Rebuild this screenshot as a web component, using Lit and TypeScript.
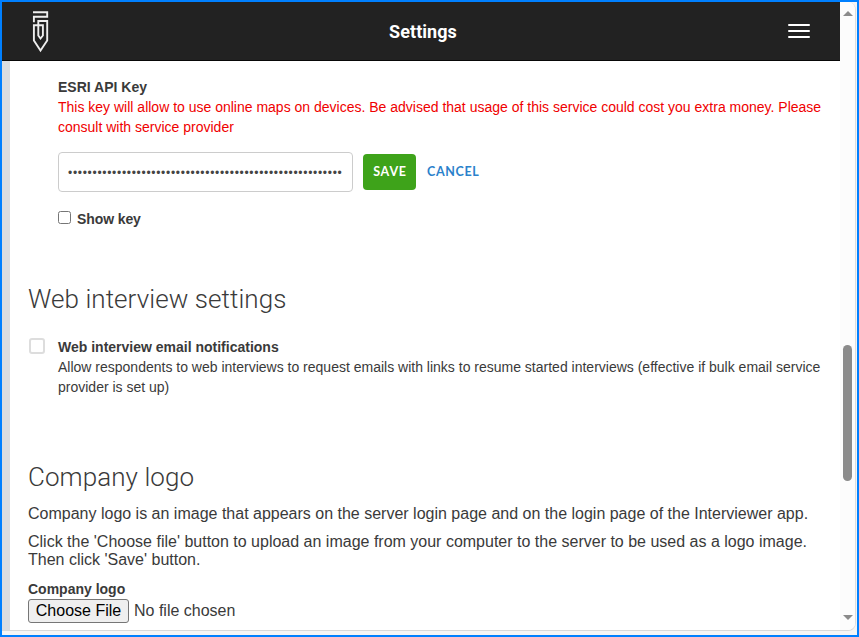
import { LitElement, html, css } from "lit";
import { customElement } from "lit/decorators.js";

@customElement("app-root")
export class AppRoot extends LitElement {
  static styles = css`
    :host { display: block; height: 637px; box-sizing: border-box; border: 2px solid #0080ff; background: #f5f5f5; overflow: hidden; font-family: "Liberation Sans", Arial, sans-serif; font-size: 14px; line-height: 20px; color: #3a3a3a; }
    * { box-sizing: border-box; }
    .window { display: flex; height: 629px; width: 854px; background: #fff; border-right: 1px solid #ddd; border-bottom: 1px solid #d8d8d8; border-radius: 0 8px 8px 0; overflow: hidden; }
    .page { width: 838px; display: flex; flex-direction: column; }
    header { height: 59px; flex: none; background: #222; border-bottom: 1px solid #080808; display: grid; grid-template-columns: 60px 1fr 60px; align-items: center; color: #fff; padding-left: 4px; }
    .logo { display: block; margin-left: 26px; width: 18px; height: 44px; margin-top: 2px; }
    .title { text-align: center; font: 700 18px/24px Roboto, sans-serif; padding-top: 1px; letter-spacing: 0.05px; }
    .menu { display: flex; flex-direction: column; gap: 4px; width: 22px; margin-left: 8px; }
    .menu i { height: 2px; background: #fff; border-radius: 1px; }
    .body { flex: 1; border-left: 8px solid #dadde0; padding: 16px 0 0 18px; white-space: nowrap; }
    .indent { padding-left: 30px; }
    .b { font-weight: 700; }
    .warn { color: #f00000; }
    .row { display: flex; align-items: center; margin-top: 15px; }
    .key { width: 295px; height: 40px; border: 1px solid #ccc; border-radius: 4px; padding: 1px 9px 0; font-size: 12px; letter-spacing: 0.7px; line-height: 39px; color: #444; }
    .save { margin-left: 10px; width: 53px; height: 36px; border-radius: 4px; background: #3ea31a; color: #fff; text-align: center; font: 700 12.5px/36px Lato, sans-serif; letter-spacing: 0.8px; padding-left: 1px; }
    .cancel { margin-left: 11px; color: #2a81cb; font: 700 12.5px/34px Lato, sans-serif; letter-spacing: 0.65px; padding-bottom: 1px; }
    .show { display: flex; margin-top: 17px; gap: 6px; letter-spacing: -0.1px; }
    .cb { width: 13px; height: 13px; border: 1px solid #767676; border-radius: 2.5px; margin-top: 2px; }
    h2 { font: 300 26px/36px Roboto, sans-serif; margin: 0; letter-spacing: 0.07px; }
    .web { margin-top: 52px; }
    .opt { display: flex; margin-top: 20px; }
    .big { width: 16px; height: 16px; border: 2px solid #ddd; border-radius: 3px; margin: 1px 13px 0 1px; flex: none; }
    .co { margin-top: 62px; }
    p { font-size: 16px; line-height: 18px; margin: 0 0 10px; }
    .co + p { margin-top: 10px; }
    .filelabel { margin-top: 10px; }
    .file { display: flex; align-items: center; gap: 5px; font-size: 16px; }
    .choose { width: 101px; height: 24px; border: 1px solid #767676; border-radius: 3px; background: #efefef; color: #000; text-align: center; line-height: 22px; }
    .scroll { width: 15px; background: #fcfcfc; display: flex; flex-direction: column; align-items: center; padding: 9px 0 10px; }
    .up, .down { border: 5px solid transparent; width: 0; height: 0; }
    .up { border-top: 0; border-bottom-color: #8b8b8b; }
    .down { border-bottom: 0; border-top-color: #8b8b8b; margin-top: auto; }
    .thumb { margin-top: 329px; width: 9px; height: 136px; border-radius: 5px; background: #8b8b8b; }
  `;

  render() {
    return html`
      <div class="window">
        <div class="page">
          <header>
            <svg class="logo" viewBox="0 0 18 44" fill="none" stroke="#eee" stroke-width="1.9">
              <path d="M1 2.2H15.2V6.8H1.9V12.2" />
              <path d="M6.3 15V11H15.2V30.5L8.5 40.6L1.9 30.5V15.2H10.9V25.5L8.5 28.5L6.3 25.5V14" />
            </svg>
            <div class="title">Settings</div>
            <div class="menu"><i></i><i></i><i></i></div>
          </header>
          <div class="body">
            <div class="indent">
              <div class="b">ESRI API Key</div>
              <div class="warn">This key will allow to use online maps on devices. Be advised that usage of this service could cost you extra money. Please<br />consult with service provider</div>
              <div class="row">
                <div class="key">${"•".repeat(56)}</div>
                <div class="save">SAVE</div>
                <div class="cancel">CANCEL</div>
              </div>
              <div class="show"><span class="cb"></span><span class="b">Show key</span></div>
            </div>
            <h2 class="web">Web interview settings</h2>
            <div class="opt">
              <span class="big"></span>
              <div><div class="b">Web interview email notifications</div>Allow respondents to web interviews to request emails with links to resume started interviews (effective if bulk email service<br />provider is set up)</div>
            </div>
            <h2 class="co">Company logo</h2>
            <p>Company logo is an image that appears on the server login page and on the login page of the Interviewer app.</p>
            <p>Click the 'Choose file' button to upload an image from your computer to the server to be used as a logo image.<br />Then click 'Save' button.</p>
            <div class="b filelabel">Company logo</div>
            <div class="file"><span class="choose">Choose File</span><span>No file chosen</span></div>
          </div>
        </div>
        <div class="scroll"><span class="up"></span><span class="thumb"></span><span class="down"></span></div>
      </div>
    `;
  }
}
